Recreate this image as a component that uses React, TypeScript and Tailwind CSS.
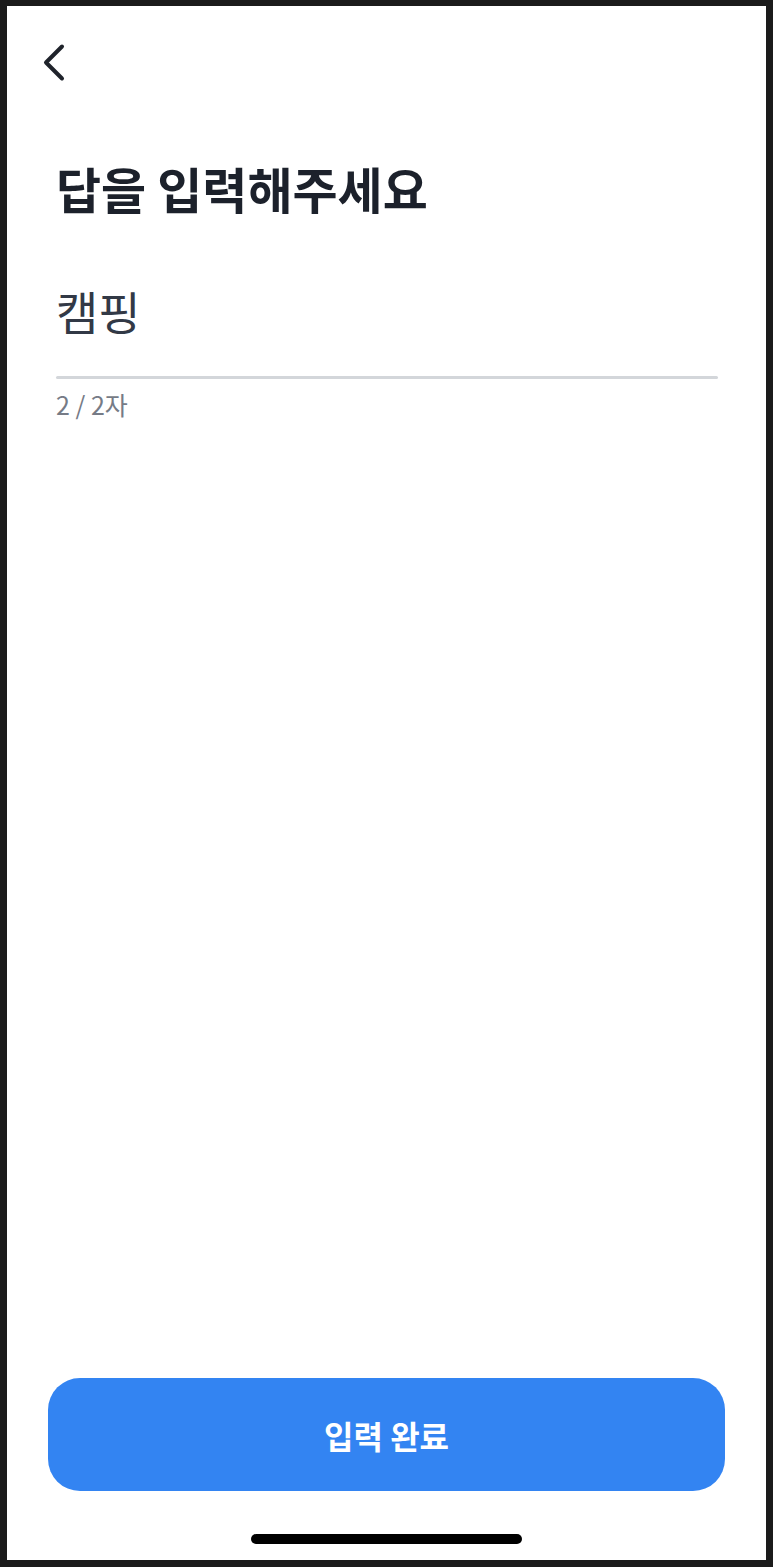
import { useState } from 'react';

const FONT = { fontFamily: '"Noto Sans CJK KR", "Noto Sans", sans-serif' };

export default function App() {
  const [answer] = useState('캠핑');
  const maxLen = 2;

  return (
    <div className="w-[773px] h-[1567px] bg-[#1b1b1b] pt-[6px] pb-[7px] px-[7px]" style={FONT}>
      <div className="w-full h-full bg-white flex flex-col">
        {/* Header */}
        <div className="h-[108px] pl-[36px] pt-[37px]">
          <button className="w-[24px] h-[40px] flex items-center justify-center">
            <svg width="24" height="40" viewBox="0 0 24 40" fill="none">
              <path d="M19 3.5 L3 19.5 L19 35.5" stroke="#1f232b" strokeWidth="4" strokeLinecap="round" strokeLinejoin="round" />
            </svg>
          </button>
        </div>

        {/* Title + input */}
        <div className="px-[49px] pt-[44px] flex flex-col">
          <h1 className="text-[49px] leading-[60px] font-bold text-[#1c212b]">답을 입력해주세요</h1>
          <div className="mt-[64px] text-[46px] leading-[56px] font-normal text-[#323946]">{answer}</div>
          <div className="mt-[38px] mr-[-1px] h-[3px] bg-[#d3d6da] rounded-full"></div>
          <p className="mt-[10px] text-[25px] leading-[30px] text-[#767b86]">
            {answer.length} / {maxLen}자
          </p>
        </div>

        <div className="flex-1"></div>

        {/* Submit */}
        <div className="px-[41px]">
          <button className="w-full h-[113px] rounded-[32px] bg-[#3384f2] text-white text-[32px] font-semibold flex items-center justify-center">
            입력 완료
          </button>
        </div>

        {/* Home indicator */}
        <div className="h-[69px] flex items-start justify-center pt-[43px]">
          <div className="w-[271px] h-[10px] rounded-full bg-black"></div>
        </div>
      </div>
    </div>
  );
}
